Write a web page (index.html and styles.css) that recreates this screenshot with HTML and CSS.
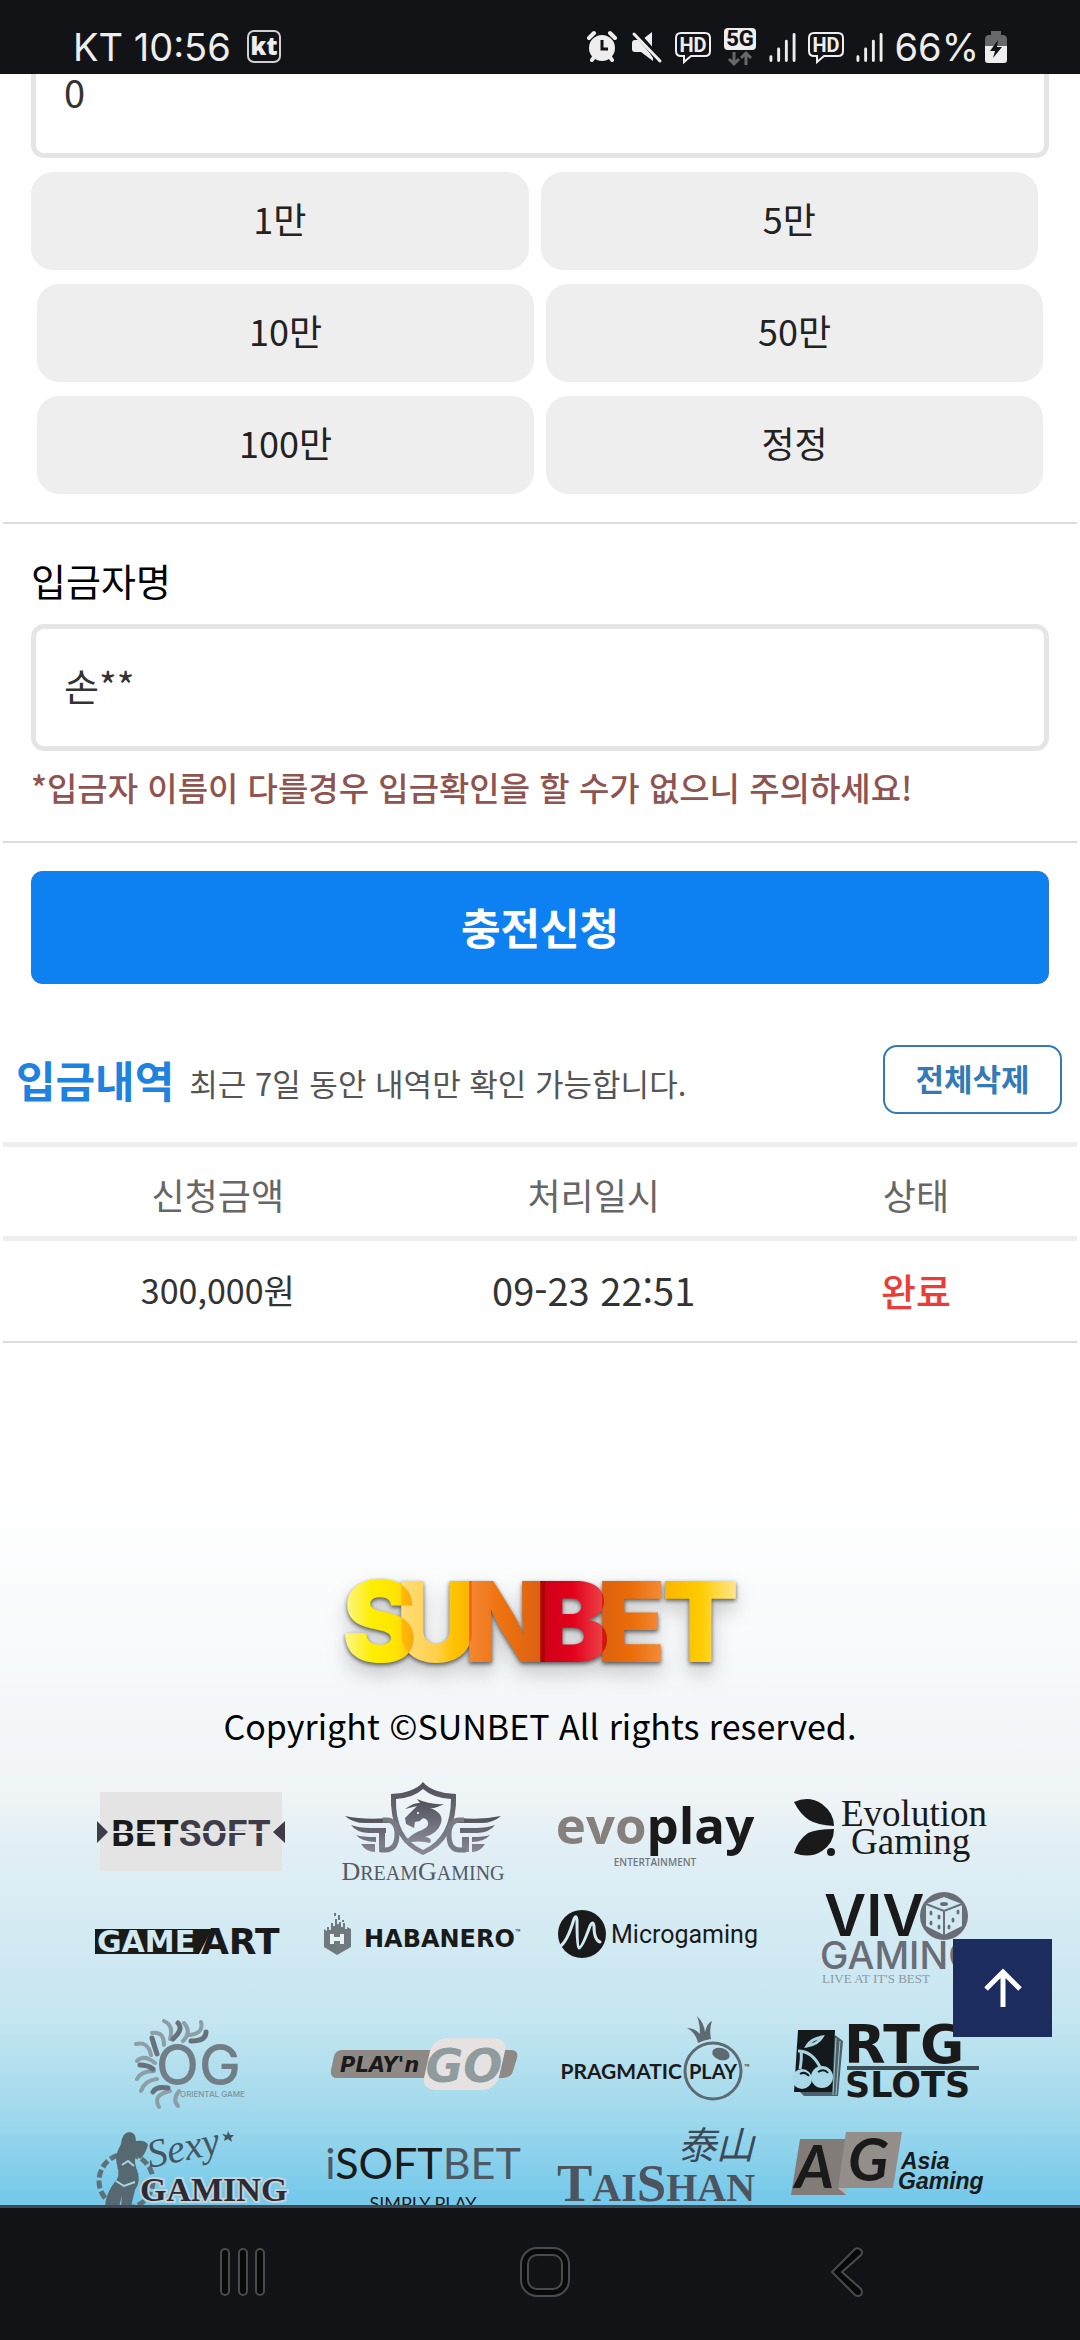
FILE: index.html
```html
<!DOCTYPE html>
<html lang="ko">
<head>
    <meta charset="UTF-8">
    <meta name="viewport" content="width=device-width, initial-scale=1.0">
    <title>SUNBET - 충전신청</title>
    <link rel="stylesheet" href="styles.css">
</head>
<body>
    <header class="status-bar">
        <div class="status-left">
            <span class="status-text">KT 10:56</span>
            <svg class="kt-icon" viewBox="0 0 34 34">
                <rect x="1" y="1" width="32" height="31" rx="6" fill="none" stroke="#d0d0d2" stroke-width="2"/>
                <text x="17" y="25" class="kt-text">kt</text>
            </svg>
        </div>
        <div class="status-right">
            <svg width="30" height="36" viewBox="0 0 30 36">
                <circle cx="15" cy="19" r="13" fill="#eee"/>
                <path d="M2 9 L7 4 M28 9 L23 4 M5 31 L7 28 M25 31 L23 28" stroke="#eee" stroke-width="4" stroke-linecap="round"/>
                <path d="M15 11 V20 H21" fill="none" stroke="#121317" stroke-width="3"/>
            </svg>
            <svg width="34" height="36" viewBox="0 0 34 36">
                <path d="M3 14 q0 -3 3 -3 h6 l12 18 v3 l-12 -9 h-6 q-3 0 -3 -3 z M14 10 l9 -7 v17 z" fill="#eee"/>
                <path d="M7 4 L32 32" stroke="#121317" stroke-width="6"/>
                <path d="M5 5 L31 32" stroke="#eee" stroke-width="3" stroke-linecap="round"/>
            </svg>
            <svg width="36" height="36" viewBox="0 0 36 36">
                <path d="M6 4 H30 Q35 4 35 9 V22 Q35 27 30 27 H16 L9 33 V27 H6 Q1 27 1 22 V9 Q1 4 6 4 Z" fill="none" stroke="#eee" stroke-width="2"/>
                <text x="18" y="23" class="hd-text">HD</text>
            </svg>
            <svg width="34" height="40" viewBox="0 0 34 40">
                <rect x="1" y="1" width="32" height="22" rx="4" fill="#eee"/>
                <text x="17" y="19" class="net-text">5G</text>
                <path d="M11 25 V37 M6 32 L11 37 L16 32 M23 38 V26 M18 31 L23 26 L28 31" fill="none" stroke="#66686b" stroke-width="3"/>
            </svg>
            <svg width="27" height="36" viewBox="0 0 28 36">
                <path d="M2 28 V32 M10 20 V32 M18 12 V32 M26 5 V32" stroke="#eee" stroke-width="3" stroke-linecap="round"/>
            </svg>
            <svg width="36" height="36" viewBox="0 0 36 36">
                <path d="M6 4 H30 Q35 4 35 9 V22 Q35 27 30 27 H16 L9 33 V27 H6 Q1 27 1 22 V9 Q1 4 6 4 Z" fill="none" stroke="#eee" stroke-width="2"/>
                <text x="18" y="23" class="hd-text">HD</text>
            </svg>
            <svg width="27" height="36" viewBox="0 0 28 36">
                <path d="M2 28 V32 M10 20 V32 M18 12 V32 M26 5 V32" stroke="#eee" stroke-width="3" stroke-linecap="round"/>
            </svg>
            <span class="battery">
                <span class="status-text">66%</span>
                <svg width="22" height="36" viewBox="0 0 22 36">
                    <path d="M6 2 H16 V6 H19 Q22 7 22 10 V17 H0 V10 Q0 7 3 6 H6 Z" fill="#66686b"/>
                    <path d="M0 17 H22 V31 Q22 34 19 34 H3 Q0 34 0 31 Z" fill="#eee"/>
                    <path d="M13 11 L5 22 H10 L8 29 L17 18 H12 Z" fill="#121317"/>
                </svg>
            </span>
        </div>
    </header>

    <main class="page">
        <form class="deposit-form" onsubmit="return false">
            <div class="form-block">
                <input type="text" class="text-input" id="amount" value="0" aria-label="충전금액">
                <div class="amount-row first">
                    <button type="button" class="amount-btn" onclick="addAmount(10000)">1만</button>
                    <button type="button" class="amount-btn" onclick="addAmount(50000)">5만</button>
                </div>
                <div class="amount-row">
                    <button type="button" class="amount-btn" onclick="addAmount(100000)">10만</button>
                    <button type="button" class="amount-btn" onclick="addAmount(500000)">50만</button>
                </div>
                <div class="amount-row">
                    <button type="button" class="amount-btn" onclick="addAmount(1000000)">100만</button>
                    <button type="button" class="amount-btn" onclick="resetAmount()">정정</button>
                </div>
            </div>

            <div class="form-block depositor">
                <label for="depositor">입금자명</label>
                <input type="text" class="text-input" id="depositor" value="손**">
                <p class="notice">*입금자 이름이 다를경우 입금확인을 할 수가 없으니 주의하세요!</p>
            </div>

            <div class="form-block submit">
                <button type="submit" class="btn-submit">충전신청</button>
            </div>
        </form>

        <section class="history">
            <div class="history-header">
                <h2 class="history-title">입금내역</h2>
                <p class="history-desc">최근 7일 동안 내역만 확인 가능합니다.</p>
                <button type="button" class="btn-delete">전체삭제</button>
            </div>
            <table class="history-table">
                <thead>
                    <tr>
                        <th class="col-amount">신청금액</th>
                        <th>처리일시</th>
                        <th>상태</th>
                    </tr>
                </thead>
                <tbody>
                    <tr>
                        <td class="amount">300,000원</td>
                        <td>09-23 22:51</td>
                        <td class="done">완료</td>
                    </tr>
                </tbody>
            </table>
        </section>
    </main>

    <footer class="footer">
        <svg class="logo" viewBox="0 0 420 112" role="img" aria-label="SUNBET">
            <defs>
                <linearGradient id="gS"><stop offset="0" stop-color="#fff69a"/><stop offset=".4" stop-color="#ffee00"/><stop offset=".7" stop-color="#ffe500"/><stop offset="1" stop-color="#ffc020"/></linearGradient>
                <linearGradient id="gU"><stop offset="0" stop-color="#ffdf80"/><stop offset=".5" stop-color="#ffd04a"/><stop offset=".7" stop-color="#ffc400"/><stop offset="1" stop-color="#f8ae00"/></linearGradient>
                <linearGradient id="gN"><stop offset="0" stop-color="#f58a3c"/><stop offset=".4" stop-color="#ef7410"/><stop offset="1" stop-color="#d85c10"/></linearGradient>
                <linearGradient id="gB"><stop offset="0" stop-color="#c80018"/><stop offset=".5" stop-color="#e3001b"/><stop offset="1" stop-color="#ec5050"/></linearGradient>
                <linearGradient id="gE"><stop offset="0" stop-color="#d96010"/><stop offset=".5" stop-color="#ec6c08"/><stop offset="1" stop-color="#f49040"/></linearGradient>
                <linearGradient id="gT"><stop offset="0" stop-color="#f9b400"/><stop offset=".5" stop-color="#ffcc00"/><stop offset="1" stop-color="#ffe898"/></linearGradient>
            </defs>
            <g class="logo-letters">
                <text x="12" y="99" fill="url(#gS)">S</text>
                <text x="66" y="99" fill="url(#gU)">U</text>
                <text x="134" y="99" fill="url(#gN)">N</text>
                <text x="205" y="99" fill="url(#gB)">B</text>
                <text x="267" y="99" fill="url(#gE)">E</text>
                <text x="332" y="99" fill="url(#gT)">T</text>
            </g>
        </svg>
        <p class="copyright">Copyright ©SUNBET All rights reserved.</p>

        <ul class="providers">
            <li>
                <svg viewBox="0 0 234 116" role="img" aria-label="Betsoft">
                    <rect x="28" y="21" width="182" height="79" fill="#e4e4e4"/>
                    <path d="M25 50 L36 61 L25 72 Z M213 50 L201 61 L213 72 Z" fill="#3e3c49"/>
                    <text x="119" y="75" class="t-betsoft">BET<tspan fill="#3e3c49">SOFT</tspan></text>
                    <path d="M39 61 H200" stroke="#e4e4e4" stroke-width="2"/>
                </svg>
            </li>
            <li>
                <svg viewBox="0 0 234 116" role="img" aria-label="DreamGaming">
                    <defs><linearGradient id="gDream" x2="0" y2="1"><stop offset="0" stop-color="#4e4f58"/><stop offset="1" stop-color="#888993"/></linearGradient></defs>
                    <g fill="url(#gDream)">
                        <path fill-rule="evenodd" d="M117 11 Q126 22 150 23 Q152 70 117 84 Q83 70 85 23 Q108 22 117 11 Z M117 18 Q107 27 90 28 Q89 66 117 79 Q145 66 145 28 Q127 27 117 18 Z"/>
                        <path d="M39 45 Q58 49 82 47 L84 52 H62 Q48 53 39 45 Z M45 54 Q53 57 64 57 H80 V62 H62 Q50 61 45 54 Z M50 64 Q56 66 70 66 V71 Q56 71 50 64 Z M55 73 H69 V81 Q60 81 55 73 Z M73 60 H79 V81 H73 Z"/>
                        <path d="M195 45 Q176 49 153 47 L150 52 H172 Q186 53 195 45 Z M189 54 Q181 57 170 57 H154 V62 H172 Q184 61 189 54 Z M184 64 Q178 66 166 66 V71 Q178 71 184 64 Z M179 73 H166 V81 Q174 81 179 73 Z M156 66 H163 V81 H156 Z"/>
                        <path d="M100 53 L99 47 L105 41 L111 35 L99 38 Q108 31 114 32 L111 28 Q124 34 138 33 Q129 38 124 37 Q138 42 135 52 Q132 62 119 66 Q127 67 124 72 Q114 69 98 72 Q106 62 116 59 Q125 55 121 49 Q117 45 114 50 L109 51 L108 57 Z"/>
                    </g>
                    <path d="M77 49 H80 Q91 49 91 63 Q91 79 79 79 H74 M158 49 H154 Q143 49 143 64 Q143 79 154 79 H160" fill="none" stroke="#797a84" stroke-width="5"/>
                    <circle cx="112" cy="42" r="1" fill="#fff"/>
                    <text x="117" y="109" class="t-dream"><tspan class="cap">D</tspan>REAM<tspan class="cap">G</tspan>AMING</text>
                </svg>
            </li>
            <li>
                <svg viewBox="0 0 234 116" role="img" aria-label="evoplay entertainment">
                    <text x="115" y="73" class="t-evoplay"><tspan fill="#86807c">evo</tspan>play</text>
                    <text x="115" y="95" class="t-evo-sub">ENTERTAINMENT</text>
                </svg>
            </li>
            <li>
                <svg viewBox="0 0 234 116" role="img" aria-label="Evolution Gaming">
                    <path d="M20 31 Q35 24 48 33 Q60 42 60 55 Q43 54 35 49 Q26 43 20 31 Z M20 82 Q24 69 34 62 Q43 58 60 58 Q60 72 48 80 Q36 88 20 82 Z" fill="#1a1a1a"/>
                    <circle cx="57" cy="81" r="4" fill="#1a1a1a"/>
                    <text x="67" y="55" class="t-evolution">Evolution</text>
                    <text x="77" y="83" class="t-evolution">Gaming</text>
                </svg>
            </li>
            <li>
                <svg viewBox="0 0 234 116" role="img" aria-label="GameArt">
                    <path d="M23 42 H140 L127 67 H23 Z" fill="#1a1a18"/>
                    <text x="25" y="65" class="t-game">GAME</text>
                    <text x="129" y="67" class="t-art">ART</text>
                </svg>
            </li>
            <li>
                <svg viewBox="0 0 234 116" role="img" aria-label="Habanero">
                    <path d="M18 42 L21 44 V40 H23 V43 H25 V36 H27 V39 H29 V32 H31 V37 H33 V35 H35 V40 H37 V36 H39 V42 H41 V40 L45 42 V60 L31 68 L18 60 Z M28 26 H30 V29 H28 Z M32 28 H34 V33 H32 Z M36 33 H38 V35 H36 Z" fill="#70797d"/>
                    <path d="M26 47 V57 M36 47 V57 M26 52 H36" stroke="#e8f2f5" stroke-width="4"/>
                    <text x="58" y="60" class="t-habanero">HABANERO</text>
                    <text x="209" y="49" class="t-tm">™</text>
                </svg>
            </li>
            <li>
                <svg viewBox="0 0 234 116" role="img" aria-label="Microgaming">
                    <circle cx="42" cy="47" r="24" fill="#1a1a1a"/>
                    <path d="M19 60 Q27 56 34 32 Q36 27 37 33 Q37 60 39 61 Q42 61 50 39 Q53 33 54 39 Q54 53 60 55" fill="none" stroke="#d4eaf3" stroke-width="3" stroke-linecap="round"/>
                    <text x="71" y="56" class="t-micro">Microgaming</text>
                </svg>
            </li>
            <li>
                <svg viewBox="0 0 234 116" role="img" aria-label="Vivo Gaming">
                    <text x="50" y="49" class="t-vivo">VIV</text>
                    <circle cx="170" cy="29" r="24" fill="#6b6d76"/>
                    <path d="M170 10 L188 17 V39 L170 48 L152 39 V17 Z" fill="#d1e9f2"/>
                    <path d="M152 17 L170 24 L188 17 M170 24 V48" fill="none" stroke="#6b6d76" stroke-width="2"/>
                    <g fill="#6b6d76">
                        <ellipse cx="170" cy="17" rx="4" ry="2"/>
                        <ellipse cx="157" cy="26" rx="1.5" ry="2.5"/><ellipse cx="165" cy="30" rx="1.5" ry="2.5"/>
                        <ellipse cx="157" cy="36" rx="1.5" ry="2.5"/><ellipse cx="165" cy="40" rx="1.5" ry="2.5"/>
                        <ellipse cx="184" cy="25" rx="1.5" ry="2.5"/><ellipse cx="179" cy="33" rx="1.5" ry="2.5"/><ellipse cx="175" cy="40" rx="1.5" ry="2.5"/>
                    </g>
                    <text x="46" y="82" class="t-vivo-sub">GAMING</text>
                    <text x="48" y="96" class="t-vivo-tag">LIVE AT IT'S BEST</text>
                </svg>
            </li>
            <li>
                <svg viewBox="0 0 234 116" role="img" aria-label="Oriental Game">
                    <g fill="none" stroke="#8d9ea6" stroke-width="4" stroke-linecap="round">
                        <path d="M92 18 Q102 22 98 36 M112 20 Q120 29 111 38 M129 19 Q132 30 118 32"/>
                        <path d="M80 30 Q92 28 92 42 M64 41 Q76 38 79 52 M65 58 Q72 51 83 60 M65 76 Q69 68 82 68 M69 88 Q73 77 85 76 M87 104 Q80 92 98 88 M106 103 Q100 97 107 88"/>
                    </g>
                    <g fill="none" stroke="#66717b" stroke-width="5" stroke-linecap="round">
                        <path d="M106 20 Q112 26 101 36 M134 29 Q134 38 119 38 M80 35 Q82 42 85 51 M68 62 Q76 62 81 66 M81 89 Q84 83 96 85"/>
                    </g>
                    <text x="84" y="82" class="t-og">OG</text>
                    <text x="108" y="94" class="t-og-sub">ORIENTAL GAME</text>
                </svg>
            </li>
            <li>
                <svg viewBox="0 0 234 116" role="img" aria-label="Play'n GO">
                    <path d="M36 47 H204 Q213 47 211 55 L207 68 Q205 75 197 75 H31 Q24 75 25 67 L28 53 Q30 47 36 47 Z" fill="#8f8985"/>
                    <path d="M142 35 H188 Q201 36 199 48 L193 74 Q189 86 177 87 H129 Q117 86 118 75 L124 48 Q128 36 142 35 Z" fill="#e6e2e2"/>
                    <text x="34" y="69" class="t-playn">PLAY'n</text>
                    <text x="158" y="79" class="t-go">GO</text>
                    <circle cx="204" cy="41" r="3" fill="none" stroke="#c3dfe9"/>
                </svg>
            </li>
            <li>
                <svg viewBox="0 0 234 116" role="img" aria-label="Pragmatic Play">
                    <path d="M158 40 Q156 30 147 25 Q155 25 160 31 Q160 21 157 13 Q164 20 165 29 Q167 20 172 18 Q169 26 171 36 Q164 37 158 40 Z" fill="#5e6a72"/>
                    <circle cx="173" cy="68" r="28" fill="none" stroke="#5e6a72" stroke-width="3"/>
                    <ellipse cx="181" cy="51" rx="9" ry="6" fill="#5e6a72" transform="rotate(18 181 51)"/>
                    <text x="142" y="76" class="t-pragmatic end">PRAGMATIC</text>
                    <text x="173" y="76" class="t-pragmatic mid">PLAY</text>
                    <text x="204" y="68" class="t-tm">™</text>
                </svg>
            </li>
            <li>
                <svg viewBox="0 0 234 116" role="img" aria-label="RTG Slots">
                    <path d="M61 32 L69 38 L64 93 H30 L23 86 Z" fill="#4d6168"/>
                    <path d="M62 35 L59 92 M66 38 L62 92" stroke="#9fc4cf" stroke-width="1"/>
                    <path d="M24 27 H61 L58 89 H20 Z" fill="#141a1c"/>
                    <path d="M33 43 Q37 36 48 34 Q44 41 33 43 Z M24 48 Q38 48 46 64 M27 48 Q28 55 26 66" fill="none" stroke="#a9d3df" stroke-width="3"/>
                    <circle cx="28" cy="76" r="10" fill="#a9d8e8"/>
                    <circle cx="48" cy="74" r="11" fill="#a9d8e8"/>
                    <path d="M26 71 Q31 68 35 73 M44 69 Q50 65 54 70" fill="none" stroke="#141a1c" stroke-width="2"/>
                    <text x="70" y="60" class="t-rtg">RTG</text>
                    <rect x="73" y="63" width="132" height="4" fill="#3d4f56"/>
                    <text x="71" y="94" class="t-slots">SLOTS</text>
                </svg>
            </li>
            <li>
                <svg viewBox="0 0 234 116" role="img" aria-label="Sexy Gaming">
                    <circle cx="54" cy="62" r="27" fill="none" stroke="#5d7179" stroke-width="5" stroke-dasharray="8 3"/>
                    <path d="M49 25 Q50 13 58 13 Q64 14 64 22 Q74 21 76 26 Q73 36 68 40 L64 34 Q62 42 64 48 Q70 62 63 71 L56 100 H48 L50 76 L44 100 H34 Q30 80 42 64 Q49 58 45 46 Q42 37 49 25 Z" fill="#566970"/>
                    <path d="M50 46 L56 42 L62 47 M44 62 L52 67 L63 63" fill="none" stroke="#a8d6e6" stroke-width="2"/>
                    <text x="78" y="49" class="t-sexy" transform="rotate(-12 78 49)">Sexy</text>
                    <path d="M156 12 L158 16 L162 16 L159 19 L160 23 L156 20 L152 22 L153 18 L150 15 L155 16 Z" fill="#46565e"/>
                    <text x="68" y="82" class="t-gaming">GAMING</text>
                </svg>
            </li>
            <li>
                <svg viewBox="0 0 234 116" role="img" aria-label="iSoftBet">
                    <text x="117" y="60" class="t-isoft"><tspan fill="#4d5963">i</tspan>SOFT<tspan fill="#4d5963">BET</tspan></text>
                    <text x="117" y="91" class="t-simply">SIMPLY PLAY</text>
                </svg>
            </li>
            <li>
                <svg viewBox="0 0 234 116" role="img" aria-label="TaiShan">
                    <text x="138" y="40" class="t-hanzi">泰山</text>
                    <text x="116" y="82" class="t-taishan"><tspan class="cap">T</tspan>AI<tspan class="cap">S</tspan>HAN</text>
                </svg>
            </li>
            <li>
                <svg viewBox="0 0 234 116" role="img" aria-label="Asia Gaming">
                    <path d="M26 20 H72 V76 H17 Z" fill="#827c78"/>
                    <path d="M72 13 H128 L119 69 H64 Z" fill="#938e8a"/>
                    <path d="M64 69 H72 V76 Z" fill="#b5b0ac"/>
                    <text x="21" y="69" class="t-ag">A</text>
                    <text x="74" y="62" class="t-ag">G</text>
                    <text x="127" y="50" class="t-asia">Asia</text>
                    <text x="124" y="70" class="t-asia">Gaming</text>
                </svg>
            </li>
        </ul>
    </footer>

    <button type="button" class="btn-top" aria-label="맨 위로" onclick="window.scrollTo(0, 0)">
        <svg width="44" height="44" viewBox="0 0 44 44">
            <path d="M22 41 V6 M5 23 L22 6 L39 23" fill="none" stroke="#fff" stroke-width="5"/>
        </svg>
    </button>

    <nav class="nav-bar">
        <button type="button" aria-label="최근 앱">
            <svg width="50" height="52" viewBox="0 0 50 52">
                <g fill="#08090b" stroke="#4a4b4d" stroke-width="2">
                    <rect x="3" y="3" width="8" height="46" rx="4"/>
                    <rect x="21" y="3" width="8" height="46" rx="4"/>
                    <rect x="38" y="3" width="8" height="46" rx="4"/>
                </g>
            </svg>
        </button>
        <button type="button" aria-label="홈">
            <svg width="52" height="52" viewBox="0 0 52 52">
                <rect x="2" y="2" width="48" height="48" rx="16" fill="#08090b" stroke="#4a4b4d" stroke-width="2"/>
                <rect x="9" y="9" width="34" height="34" rx="9" fill="#121317" stroke="#4a4b4d" stroke-width="2"/>
            </svg>
        </button>
        <button type="button" aria-label="뒤로">
            <svg width="34" height="52" viewBox="0 0 34 52">
                <path d="M25 3 Q28 1 31 4 Q33 6 31 9 L12 26 L31 43 Q33 46 31 49 Q28 51 25 49 L2 26 Z" fill="#08090b" stroke="#4a4b4d" stroke-width="2"/>
            </svg>
        </button>
    </nav>

    <script>
        const amountInput = document.getElementById('amount');

        function addAmount(value) {
            const current = Number(amountInput.value.replace(/,/g, '')) || 0;
            amountInput.value = (current + value).toLocaleString();
        }

        function resetAmount() {
            amountInput.value = '0';
        }
    </script>
</body>
</html>
```
FILE: styles.css
```css
* {
    margin: 0;
    padding: 0;
    box-sizing: border-box;
}

body {
    font-family: "Noto Sans CJK KR", "Noto Sans", sans-serif;
    font-size: 36px;
    color: #222;
    background: #fff;
    min-height: 100vh;
}

button,
input {
    font-family: inherit;
}

button {
    cursor: pointer;
}

svg {
    display: block;
}

/* 상단 상태바 */
.status-bar {
    position: fixed;
    top: 0;
    left: 0;
    right: 0;
    z-index: 10;
    height: 74px;
    padding: 20px 73px 0;
    background: #121317;
    color: #eee;
    display: flex;
    align-items: center;
    justify-content: space-between;
}

.status-left,
.status-right,
.battery {
    display: flex;
    align-items: center;
}

.status-left {
    gap: 16px;
}

.status-right {
    gap: 12px;
}

.battery {
    gap: 6px;
}

.status-text {
    font-family: Inter, Roboto, sans-serif;
    font-size: 38px;
    line-height: 40px;
}

.kt-icon {
    width: 34px;
    height: 34px;
}

.kt-text {
    font: 800 24px "Open Sans", sans-serif;
    fill: #eee;
    text-anchor: middle;
}

.hd-text {
    font: 700 20px Roboto, sans-serif;
    fill: #eee;
    text-anchor: middle;
}

.net-text {
    font: 800 22px Roboto, sans-serif;
    fill: #121317;
    text-anchor: middle;
}

/* 충전 폼 */
.page {
    padding: 31px 3px 0;
}

.form-block {
    padding: 0 28px 28px;
    border-bottom: 2px solid #ddd;
}

.text-input {
    display: block;
    width: 100%;
    height: 127px;
    padding: 0 28px 6px;
    border: 5px solid #e5e5e5;
    border-radius: 13px;
    background: #fff;
    font-size: 38px;
    color: #333;
    outline: none;
}

.text-input:focus {
    border-color: #0d80f2;
}

.amount-row {
    display: flex;
    gap: 12px;
    margin-top: 14px;
    padding: 0 6px;
}

.amount-row.first {
    padding: 0 11px 0 0;
}

.amount-btn {
    flex: 1;
    height: 98px;
    padding-bottom: 6px;
    border: none;
    border-radius: 22px;
    background: #eee;
    font-size: 36px;
    color: #222;
}

.depositor {
    padding-top: 34px;
    padding-bottom: 36px;
}

.depositor label {
    display: block;
    margin-bottom: 22px;
    font-size: 38px;
    line-height: 44px;
    color: #000;
}

.notice {
    margin-top: 18px;
    font-size: 33px;
    font-weight: 500;
    line-height: 36px;
    color: #8f5350;
}

.submit {
    padding-top: 28px;
    padding-bottom: 0;
    border-bottom: none;
}

.btn-submit {
    display: block;
    width: 100%;
    height: 113px;
    padding-bottom: 4px;
    border: 1px solid #357ab8;
    border-radius: 11px;
    background: #0d80f2;
    font-size: 43px;
    font-weight: 700;
    color: #fff;
}

/* 입금내역 */
.history-header {
    display: flex;
    align-items: center;
    gap: 15px;
    margin-top: 61px;
    padding: 0 15px 28px 13px;
}

.history-title {
    font-size: 43px;
    font-weight: 700;
    line-height: 69px;
    color: #1e82e0;
}

.history-desc {
    flex: 1;
    padding-top: 6px;
    font-size: 31px;
    color: #555;
}

.btn-delete {
    width: 179px;
    height: 69px;
    padding-bottom: 4px;
    border: 2px solid #337ab7;
    border-radius: 14px;
    background: #fff;
    font-size: 31px;
    font-weight: 700;
    color: #337ab7;
}

.history-table {
    width: 100%;
    border-collapse: separate;
    border-spacing: 0;
    table-layout: fixed;
    text-align: center;
}

.history-table th {
    height: 99px;
    padding-top: 4px;
    border-top: 5px solid #eee;
    border-bottom: 5px solid #eee;
    font-weight: 400;
    color: #666;
}

.history-table .col-amount {
    width: 40%;
}

.history-table td {
    height: 102px;
    padding-bottom: 4px;
    border-bottom: 2px solid #ddd;
    font-size: 38px;
    color: #333;
}

.history-table .amount {
    font-size: 34px;
}

.history-table .done {
    color: #ec3c37;
    font-weight: 500;
}

/* 푸터 */
.footer {
    margin-top: 136px;
    padding: 84px 72px 0;
    background: linear-gradient(#fff 0%, #f8fafb 22%, #eef3f5 43%, #e2eff5 48%, #c6e6f1 71%, #a0d9ec 84%, #76c9ea 95%);
}

.logo {
    width: 420px;
    height: 112px;
    margin: 0 auto;
    overflow: visible;
}

.logo-letters {
    font: 900 112px Inter, sans-serif;
    isolation: isolate;
    filter: drop-shadow(0 2px 2px rgba(0, 0, 0, 0.6)) drop-shadow(0 10px 10px rgba(0, 0, 0, 0.2));
}

.logo-letters text {
    mix-blend-mode: multiply;
}

.copyright {
    margin: 29px 0 23px;
    font-size: 34px;
    line-height: 44px;
    text-align: center;
    color: #000;
}

.providers {
    list-style: none;
    display: grid;
    grid-template-columns: repeat(4, 1fr);
}

.providers svg {
    width: 100%;
    overflow: visible;
}

.providers text {
    fill: #1a1a1a;
}

.providers .t-betsoft {
    font: 700 37px Roboto, sans-serif;
    text-anchor: middle;
}

.providers .t-dream {
    font: 20px "Liberation Serif", serif;
    fill: #555963;
    text-anchor: middle;
}

.t-dream .cap {
    font-size: 26px;
}

.providers .t-evoplay {
    font: 700 51px "Open Sans", sans-serif;
    text-anchor: middle;
}

.providers .t-evo-sub {
    font: 600 10px "Open Sans", sans-serif;
    fill: #73777b;
    text-anchor: middle;
}

.providers .t-evolution {
    font: 37px "Liberation Serif", serif;
}

.providers .t-game {
    font: 700 30px "DejaVu Sans", sans-serif;
    fill: #d0e9f2;
}

.providers .t-art {
    font: 700 36px "DejaVu Sans", sans-serif;
}

.providers .t-habanero {
    font: 700 24px "DejaVu Sans", sans-serif;
}

.providers .t-tm {
    font: 10px Roboto, sans-serif;
}

.providers .t-micro {
    font: 25px Roboto, sans-serif;
}

.providers .t-vivo {
    font: 600 58px Inter, sans-serif;
}

.providers .t-vivo-sub {
    font: 500 38px Inter, sans-serif;
    fill: #6b6d76;
}

.providers .t-vivo-tag {
    font: 13px "Liberation Serif", serif;
    fill: #8b99a2;
}

.providers .t-og {
    font: 500 56px Inter, sans-serif;
    fill: #717e86;
}

.providers .t-og-sub {
    font: 500 8px Inter, sans-serif;
    fill: #7f929b;
}

.providers .t-playn {
    font: italic 700 21px "DejaVu Sans", sans-serif;
}

.providers .t-go {
    font: italic 700 46px "DejaVu Sans", sans-serif;
    fill: #8f9b9d;
    text-anchor: middle;
}

.providers .t-pragmatic {
    font: 700 21px Lato, sans-serif;
}

.providers .t-pragmatic.end {
    text-anchor: end;
}

.providers .t-pragmatic.mid {
    font-size: 20px;
    text-anchor: middle;
}

.providers .t-rtg {
    font: 700 54px "DejaVu Sans", sans-serif;
}

.providers .t-slots {
    font: 700 35px "DejaVu Sans", sans-serif;
}

.providers .t-sexy {
    font: italic 40px "Liberation Serif", serif;
    fill: #46565e;
}

.providers .t-gaming {
    font: 700 34px "Liberation Serif", serif;
    fill: #2b2d36;
    stroke: #c4d3da;
    stroke-width: 4px;
    paint-order: stroke;
}

.providers .t-isoft {
    font: 43px Lato, sans-serif;
    text-anchor: middle;
}

.providers .t-simply {
    font: 18px Lato, sans-serif;
    text-anchor: middle;
}

.providers .t-hanzi {
    font: italic 38px "Noto Sans CJK SC", sans-serif;
    fill: #3a4a56;
}

.providers .t-taishan {
    font: 700 40px "Liberation Serif", serif;
    fill: #4b545f;
    text-anchor: middle;
}

.t-taishan .cap {
    font-size: 53px;
}

.providers .t-ag {
    font: italic 700 60px Lato, sans-serif;
}

.providers .t-asia {
    font: italic 700 23px "Liberation Sans", sans-serif;
}

/* 맨 위로 버튼 */
.btn-top {
    position: fixed;
    right: 28px;
    bottom: 303px;
    z-index: 5;
    width: 99px;
    height: 98px;
    border: none;
    background: #1c2c5e;
    display: flex;
    align-items: center;
    justify-content: center;
}

/* 하단 내비게이션 */
.nav-bar {
    position: fixed;
    left: 0;
    right: 0;
    bottom: 0;
    z-index: 10;
    height: 135px;
    padding: 0 82px 4px 92px;
    border-top: 3px solid #3d4852;
    background: #121317;
    display: grid;
    grid-template-columns: repeat(3, 1fr);
}

.nav-bar button {
    border: none;
    background: none;
    display: flex;
    align-items: center;
    justify-content: center;
}
```
